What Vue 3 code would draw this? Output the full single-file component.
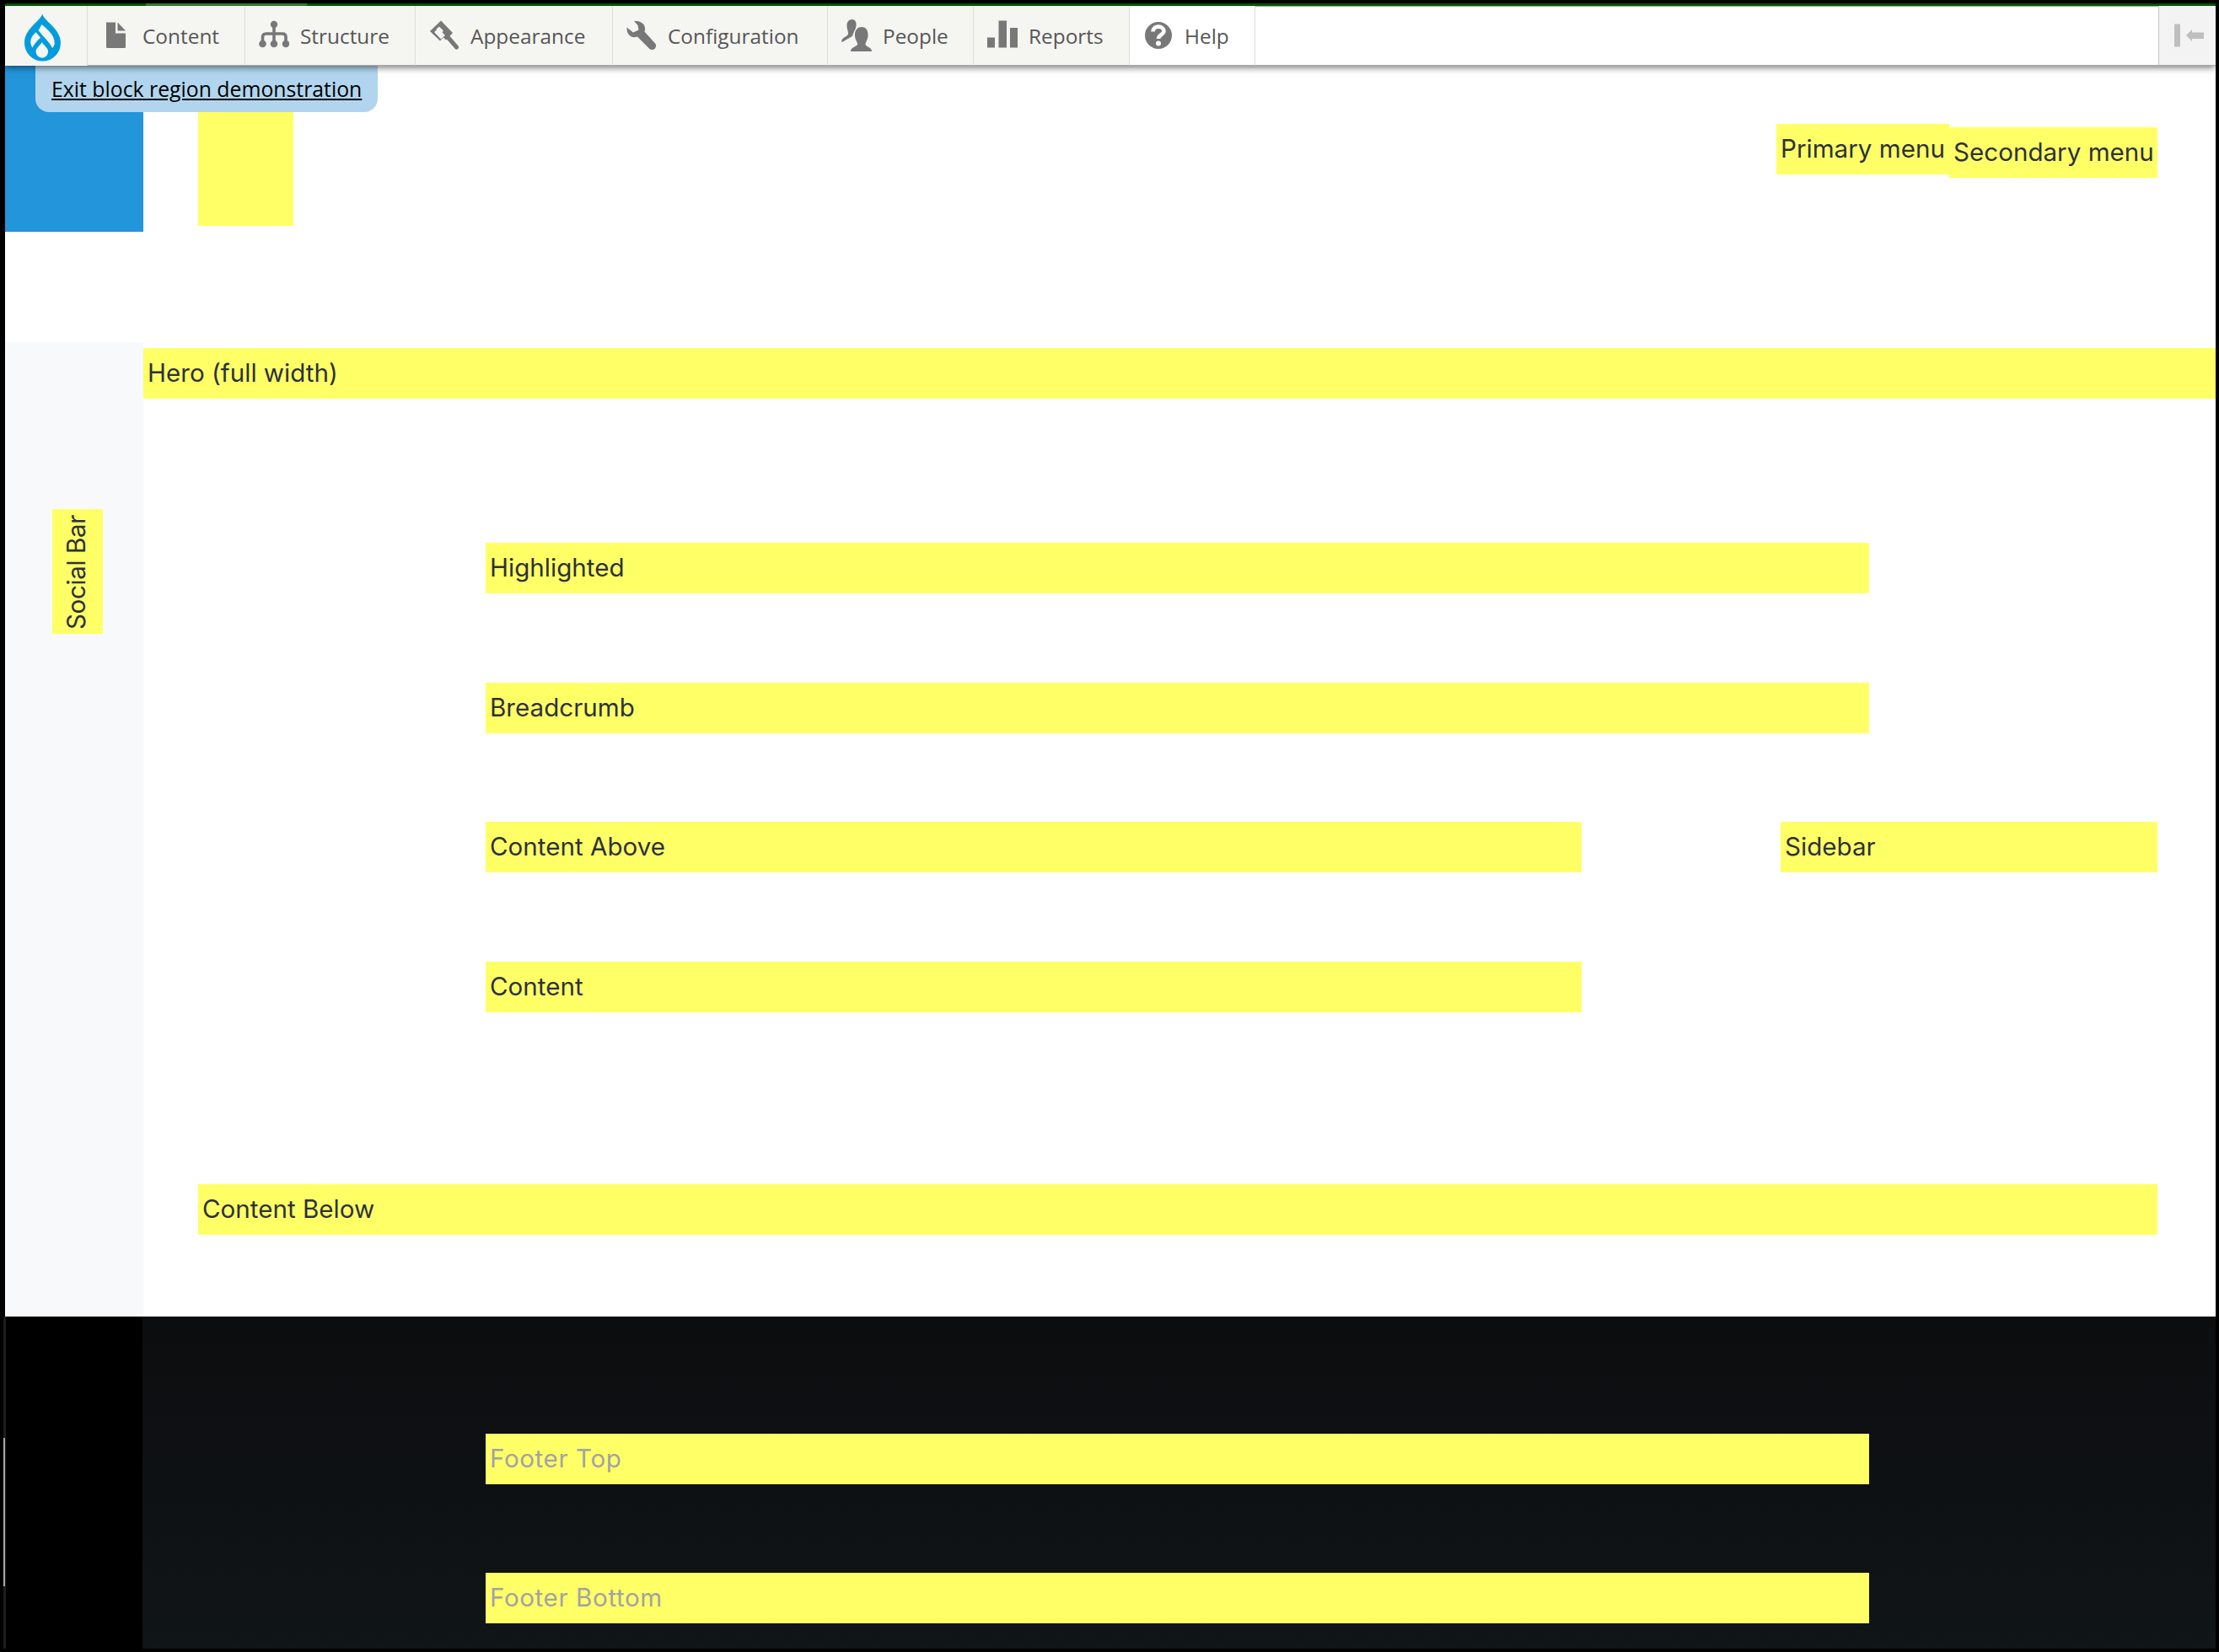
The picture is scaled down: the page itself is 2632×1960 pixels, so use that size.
<script setup>
const tabs = [
  { key: 'content', label: 'Content' },
  { key: 'structure', label: 'Structure' },
  { key: 'appearance', label: 'Appearance' },
  { key: 'configuration', label: 'Configuration' },
  { key: 'people', label: 'People' },
  { key: 'reports', label: 'Reports' },
  { key: 'help', label: 'Help' }
]
</script>

<template>
  <div class="frame">
    <div class="edge-strip"><span class="edge-light"></span></div>
    <div class="stripe"><span class="stripe-lit"></span></div>
    <nav class="toolbar">
      <a class="home">
        <svg class="drop" viewBox="88 48 130 170" width="43" height="57">
          <path fill="#009cde" d="M152 48C160 76 218 100 218 153A65 65 0 0 1 88 153C88 100 144 76 152 48Z" />
          <path fill="#f5f5f2" d="M150 86C168 102 196 122 196 153C196 160 193 166 188 171C178 150 160 134 138 108Z" />
          <path fill="#f5f5f2" d="M129 114L146 134C134 144 123 156 117 169C111 162 110 154 110 148C110 136 118 124 129 114Z" />
          <path fill="#f5f5f2" d="M151 150C157 162 173 170 173 184A22 22 0 0 1 129 184C129 170 145 162 151 150Z" />
        </svg>
      </a>
      <a v-for="t in tabs" :key="t.key" class="tab" :class="'tab-' + t.key">
        <span class="ico">
          <svg v-if="t.key === 'content'" viewBox="0 0 36 36" width="36" height="36">
            <path fill="#787878" d="M6 2.500H17V15.500H29V31.500Q29 33 27.500 33H7.500Q6 33 6 31.500Z" />
            <path fill="#787878" d="M19.500 2.500L29 12.500H19.500Z" />
          </svg>
          <svg v-else-if="t.key === 'structure'" viewBox="0 0 36 36" width="36" height="36">
            <circle cx="18" cy="5" r="4.200" fill="#787878" />
            <circle cx="4.500" cy="28" r="4.300" fill="#787878" />
            <circle cx="18" cy="28" r="4.300" fill="#787878" />
            <circle cx="32" cy="28" r="4.300" fill="#787878" />
            <path fill="none" stroke="#787878" stroke-width="3.600" d="M18 7V28M4.500 28V20Q4.500 16 8.500 16H28Q32 16 32 20V28" />
          </svg>
          <svg v-else-if="t.key === 'appearance'" viewBox="0 0 36 36" width="36" height="36">
            <path fill="#787878" d="M14 0.500L28 15L20 23.500L13 16.500L17 12.500L12 7.500L7.500 11.500L1 13Z" />
            <path fill="#787878" d="M1 13L7 9L17 20.500L13 24.500Z" />
            <path fill="#f5f5f2" d="M6 14L11 9.500L19 18L14 22.500Z" />
            <path fill="none" stroke="#787878" stroke-width="5" stroke-linecap="round" d="M23 21L32.500 32" />
          </svg>
          <svg v-else-if="t.key === 'configuration'" viewBox="0 0 36 36" width="36" height="36">
            <path fill="#787878" d="M9 1C18 0 24 6 21.500 13.500L34.500 28C37 32 31.500 37.500 27.500 34L13 19.500C6 22 0 17 0.500 8.500L8 14.500L14.500 11.500L13.500 6Z" />
          </svg>
          <svg v-else-if="t.key === 'people'" viewBox="0 0 36 38" width="36" height="38">
            <path fill="#787878" d="M12.500 0C17 0 18 4 17.500 8C17 12 14.500 14 14 17C13.800 19 12 21 9.500 22C7 23 4.500 25 1 27C0 27 0 25 1 23.500C3 21 7 20 8 17.500C8.500 15 6.500 12 6.500 7C6.500 3 9 0 12.500 0Z" />
            <path fill="#787878" d="M24 9C30 9 32 14 31.500 20C31 25 28.500 27 28.500 30C30 33 36 33 36 38H11C11 33 17 33 19 30C19.500 27 16.500 25 16 20C15.500 14 18 9 24 9Z" />
          </svg>
          <svg v-else-if="t.key === 'reports'" viewBox="0 0 36 36" width="36" height="36">
            <path fill="#787878" d="M0 20.500H9V32.500H0ZM13.500 0.500H23V32.500H13.500ZM27 9H36V32.500H27Z" />
          </svg>
          <svg v-else viewBox="0 0 36 36" width="36" height="36">
            <circle cx="18" cy="18" r="16" fill="#787878" />
            <path fill="none" stroke="#fff" stroke-width="4.600" d="M11.500 13.500C11.500 5.500 24.500 6 24.500 13C24.500 17 18 17.500 18 22" />
            <circle cx="18" cy="27.500" r="3" fill="#fff" />
          </svg>
        </span>
        <span class="tab-label">{{ t.label }}</span>
      </a>
      <a class="toggle">
        <svg viewBox="0 0 36 28" width="36" height="28">
          <path fill="#bfbfbf" d="M0 0.500H7V27.500H0ZM14 14L21 7V10.500H35V18H21V21Z" />
        </svg>
      </a>
    </nav>
    <a class="exit">Exit block region demonstration</a>

    <div class="page">
      <header class="site-header">
        <div class="brand-block"></div>
        <div class="region logo-region"></div>
        <div class="menus">
          <div class="region menu-primary">Primary menu</div>
          <div class="region menu-secondary">Secondary menu</div>
        </div>
      </header>

      <div class="middle">
        <aside class="social">
          <div class="region social-bar">Social Bar</div>
        </aside>
        <main class="main">
          <div class="region hero">Hero (full width)</div>
          <div class="grid-wrap">
            <div class="region">Highlighted</div>
            <div class="region">Breadcrumb</div>
            <div class="content-row">
              <div class="content-col">
                <div class="region">Content Above</div>
                <div class="region">Content</div>
              </div>
              <div class="region sidebar">Sidebar</div>
            </div>
          </div>
          <div class="region below">Content Below</div>
        </main>
      </div>

      <footer class="site-footer">
        <div class="footer-side"></div>
        <div class="footer-main">
          <div class="region footer-region">Footer Top</div>
          <div class="region footer-region">Footer Bottom</div>
        </div>
      </footer>
    </div>
  </div>
</template>

<style>
html, body { margin: 0; background: #000; }
</style>

<style scoped>
.frame {
  position: relative;
  width: 2632px;
  height: 1960px;
  box-sizing: border-box;
  padding: 4px 4px 4px 6px;
  background: #000;
  display: flex;
  flex-direction: column;
  font-family: Inter, "Liberation Sans", sans-serif;
  overflow: hidden;
}
.edge-strip {
  position: absolute;
  left: 4px;
  top: 1562px;
  bottom: 4px;
  width: 3px;
  background: #1d1d1d;
  z-index: 3;
}
.edge-light {
  position: absolute;
  left: 0;
  top: 144px;
  width: 2px;
  height: 176px;
  background: #a6a6a6;
}
.stripe {
  height: 3px;
  background: #005500;
  flex: none;
  position: relative;
  z-index: 5;
}
.stripe-lit {
  display: block;
  margin-left: 167px;
  width: 191px;
  height: 3px;
  background: #2b7a2b;
}
.toolbar {
  height: 71px;
  flex: none;
  display: flex;
  align-items: stretch;
  background: #fff;
  position: relative;
  z-index: 5;
  box-shadow: 0 0 0 1px #a8a8a8 inset, 0 2px 8px rgba(0, 0, 0, 0.55);
  clip-path: inset(0 0 -14px 0);
  font-family: "Open Sans", "Liberation Sans", sans-serif;
  font-size: 24.4px;
  color: #565656;
}
.home {
  width: 98px;
  flex: none;
  background: #f5f5f2;
  border-right: 1px solid #dcdcd8;
  display: flex;
  align-items: flex-start;
  padding: 9px 0 0 23px;
  box-sizing: border-box;
}
.tab {
  display: flex;
  align-items: center;
  flex: none;
  box-sizing: border-box;
  padding-left: 16px;
  background: #f5f5f2;
  border-right: 1px solid #dcdcd8;
  border-bottom: 1px solid #a8a8a8;
}
.ico {
  width: 36px;
  height: 38px;
  display: flex;
  align-items: center;
  justify-content: center;
  margin-right: 13px;
  flex: none;
}
.tab-label { white-space: nowrap; }
.tab-content { width: 187px; }
.tab-structure { width: 202px; }
.tab-appearance { width: 234px; }
.tab-configuration { width: 255px; }
.tab-people { width: 173px; }
.tab-reports { width: 185px; }
.tab-help { width: 149px; background: #fff; }
.toggle {
  margin-left: auto;
  width: 68px;
  flex: none;
  box-sizing: border-box;
  background: #f3f3f3;
  border-left: 1px solid #c8c8c8;
  border-bottom: 1px solid #a8a8a8;
  display: flex;
  align-items: center;
  padding-left: 18px;
}
.exit {
  position: absolute;
  left: 42px;
  top: 78px;
  width: 406px;
  height: 55px;
  box-sizing: border-box;
  padding-left: 19px;
  line-height: 54px;
  background: #b1d5ee;
  border-radius: 0 0 16px 16px;
  color: #000;
  font-family: "Open Sans", "Liberation Sans", sans-serif;
  font-size: 24.8px;
  text-decoration: underline;
  white-space: nowrap;
  z-index: 4;
}
.page {
  flex: 1;
  display: flex;
  flex-direction: column;
  background: #fff;
}
.region {
  height: 60px;
  line-height: 58px;
  box-sizing: border-box;
  padding: 0 5px;
  background: #ffff66;
  color: #2d3138;
  font-size: 29.6px;
  white-space: nowrap;
}
.site-header {
  height: 328px;
  flex: none;
  display: flex;
  align-items: flex-start;
  padding-right: 69px;
  box-sizing: border-box;
}
.brand-block {
  width: 164px;
  height: 197px;
  background: #2295db;
  flex: none;
}
.logo-region {
  width: 113px;
  height: 140px;
  margin: 50px 0 0 65px;
  flex: none;
}
.menus {
  margin-left: auto;
  display: flex;
  align-items: flex-start;
  padding-top: 69px;
}
.menu-primary { width: 205px; }
.menu-secondary { width: 247px; margin-top: 4px; }
.middle {
  height: 1156px;
  flex: none;
  display: flex;
}
.social {
  width: 164px;
  flex: none;
  background: #f7f9fa;
  padding: 198px 0 0 56px;
  box-sizing: border-box;
}
.social-bar {
  width: 60px;
  height: 148px;
  padding: 5px 0;
  writing-mode: vertical-rl;
  transform: rotate(180deg);
  text-align: left;
  line-height: 56px;
  letter-spacing: -0.4px;
}
.main {
  flex: 1;
  min-width: 0;
  display: flex;
  flex-direction: column;
  padding-top: 7px;
}
.grid-wrap {
  margin: 171px 0 0 406px;
  width: 1641px;
  display: flex;
  flex-direction: column;
  gap: 106px;
}
.content-row {
  width: 1983px;
  display: flex;
  justify-content: space-between;
  align-items: flex-start;
  margin-top: -1px;
}
.content-col {
  width: 1300px;
  display: flex;
  flex-direction: column;
  gap: 106px;
}
.sidebar { width: 447px; }
.below {
  margin: 204px 69px 0 65px;
}
.site-footer {
  flex: 1;
  display: flex;
}
.footer-side {
  width: 163px;
  flex: none;
  background: #000;
}
.footer-main {
  flex: 1;
  background: linear-gradient(#0c0d0f, #101518);
  padding: 139px 0 0 407px;
  display: flex;
  flex-direction: column;
  gap: 105px;
}
.footer-region {
  width: 1641px;
  color: #a2a2a6;
  letter-spacing: 0.6px;
}
</style>
